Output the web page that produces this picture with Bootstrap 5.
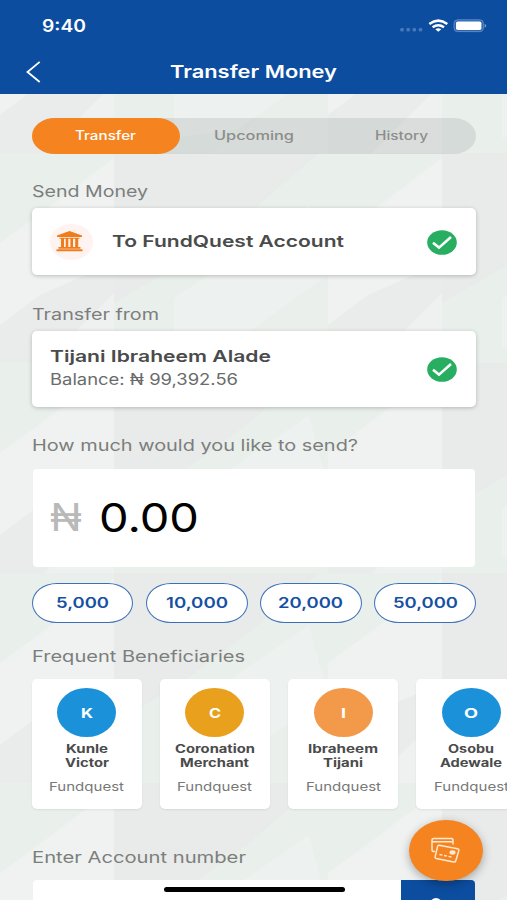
<!DOCTYPE html>
<html lang="en">
<head>
<meta charset="utf-8">
<meta name="viewport" content="width=device-width, initial-scale=1">
<title>Transfer Money</title>
<link href="https://cdn.jsdelivr.net/npm/bootstrap@5.3.0/dist/css/bootstrap.min.css" rel="stylesheet">
<style>
:root{--brand:#0c4da0;--accent:#f58420;--ink:#4a4b4b;--muted-ink:#7c7e7d}
body{font-family:Inter,"Open Sans",sans-serif;color:var(--ink);background:#ecefed}
.screen{height:900px;overflow:hidden;position:relative;
 background:#edf0ee url("data:image/svg+xml,%3Csvg xmlns='http://www.w3.org/2000/svg' width='328' height='210'%3E%3Cpath fill='%23ebefec' d='M0 0h328v210H0z'/%3E%3Cpath fill='%23e8ebe9' d='M0 0h205L135 60 60 115 0 150z'/%3E%3Cpath fill='%23e9efeb' d='M205 0h123v32L255 90 211 122 130 187 95 210H0v-60L60 115 135 60z'/%3E%3Cpath fill='%23eff2f0' d='M328 5v120L260 155 214 190v-100L255 60z'/%3E%3Cpath fill='%23edf1ef' d='M60 145 195 52 214 122 125 186 60 195z'/%3E%3Cpath fill='%23e9eceb' d='M214 172 254 142 328 110v100H214z'/%3E%3Cpath fill='%23eef1ef' d='M328 140v70h-70z'/%3E%3C/svg%3E") 114px 153px}
.fit{display:inline-block;white-space:nowrap;transform-origin:0 50%}
.fit-slot{display:block;white-space:nowrap;overflow:visible;flex:none}
.app-head{background:var(--brand);height:93.5px}
.status-row{height:50px;padding:2px 20px 0 42px}
.title-row{height:43px;padding-left:26px}
.time-text{font-size:16.8px;font-weight:600;padding-top:1px}
.title-text{font-size:17.2px;font-weight:600}
.content{padding:24.5px 31px 0 31.5px}
.seg{height:35.5px;background:rgba(120,125,122,.17);border-radius:23px/18px;color:#8b8d8c;font-size:12.4px;font-weight:500}
.seg-on{background:var(--accent);color:#fff;border-radius:23px/18px}
.seg>div{width:148.3px;padding-top:2px}
.heading{font-size:15.8px;line-height:20px;color:var(--muted-ink)}
.heading>span{padding-top:1px}
.h-a{margin:27.8px 0 6.2px}.h-b{margin:28.7px 0 6px}.h-c{margin:28.7px 0 12.6px}
.h-d{margin:23px 0 11.5px}.h-e{margin:38.3px 0 12.2px}
.panel{background:#fff;border-radius:5px;box-shadow:0 1px 4px rgba(0,0,0,.22)}
.p-one{height:66.8px;padding:0 19px 0 18px}
.p-two{height:75.7px;padding:0 19px 0 18px}
.bank-disc{width:43px;height:36px;border-radius:50%;background:#fef3f1;padding-right:4px}
.strong-text{font-size:16.3px;font-weight:600;line-height:22px}
.p-one .strong-text{padding-bottom:2px;margin-left:19px}
.p-one svg.ms-auto,.p-two svg.ms-auto{margin-top:1px}
.bal-text{font-size:15.5px;line-height:23px;color:#6a6c6b}
.p-two>div{margin-top:-1px}
.p-two .bal-text{padding-top:1px}
.amount{height:98px;background:#fff;border-radius:4px;margin:0 1.3px;padding-left:17px}
.naira{font-size:37.5px;line-height:40px;color:#b9b9b9;font-weight:400}
.zero{font-size:39.5px;line-height:40px;color:#000;margin-left:17.5px}
.chips{margin-top:16px;gap:12.2px}
.chip{flex:1;height:40.5px;background:#fff;border:1.3px solid #3b70b9;border-radius:25px/20.2px;color:#1550a2;font-size:14.6px;font-weight:600;padding-top:1.5px}
.bens{gap:18.3px;width:600px}
.ben{width:110px;height:130px;background:#fff;border-radius:5px;box-shadow:0 1px 2px rgba(0,0,0,.08);padding-top:9.5px}
.avatar{width:59px;height:49px;border-radius:50%;color:#fff;font-size:12.8px;font-weight:700;padding-top:1px}
.ben-name{font-size:11.5px;font-weight:700;line-height:13.4px;margin-top:6px}
.ben-org{font-size:12px;line-height:16px;color:#777978;margin-top:8.5px}
.acct{height:40px;background:#fff;border-radius:4px;margin:0 1.3px}
.go{width:73.5px;background:var(--brand);border-radius:0 4px 0 0;padding-top:17px}
.fab{position:absolute;left:408.5px;top:819.5px;width:74px;height:61px;border-radius:50%;background:var(--accent);box-shadow:0 3px 10px rgba(0,0,0,.3)}
.home-bar{position:absolute;left:163.5px;top:886.6px;width:181px;height:5.4px;border-radius:3px;background:#000}
svg{display:block;flex:none}
</style>
<script src="https://cdn.jsdelivr.net/npm/bootstrap@5.3.0/dist/js/bootstrap.bundle.min.js"></script>
</head>
<body>
<div class="screen">
<header class="app-head text-white">
 <div class="status-row d-flex align-items-center justify-content-between">
  <span class="time-text" data-w="44">9:40</span>
  <svg width="88" height="16" viewBox="399 18 88 16">
   <g fill="#4779ba"><circle cx="402" cy="29.7" r="1.9"/><circle cx="408.2" cy="29.7" r="1.9"/><circle cx="414.3" cy="29.7" r="1.9"/><circle cx="420.5" cy="29.7" r="1.9"/></g>
   <g fill="none" stroke="#fff" stroke-width="2.5"><path d="M429.3 23.9Q438.3 17.3 447.3 23.9M432.6 27.3Q438.3 23.1 444 27.3"/></g>
   <path fill="#fff" d="M435.3 29.3Q438.3 27.4 441.3 29.3L438.3 31.8z"/>
   <rect x="454" y="19.8" width="29.4" height="11.8" rx="3.6" fill="#2c66b0" stroke="#6f97ca" stroke-width=".8"/>
   <rect x="456" y="21.4" width="25.4" height="8.6" rx="1.8" fill="#fff"/><path d="M484.7 23.8q3 2 0 4z" fill="#7fa3d1"/>
  </svg>
 </div>
 <div class="title-row d-flex align-items-center">
  <svg width="15" height="22" viewBox="0 0 15 22"><path d="M13.7 .9 1.5 11 13.7 21" fill="none" stroke="#fff" stroke-width="1.8"/></svg>
  <span class="title-text" style="margin-left:129px" data-w="167">Transfer Money</span>
 </div>
</header>
<main class="content">
 <nav class="seg d-flex">
  <div class="seg-on d-flex align-items-center justify-content-center"><span data-w="61">Transfer</span></div>
  <div class="d-flex align-items-center justify-content-center"><span data-w="80">Upcoming</span></div>
  <div class="d-flex align-items-center justify-content-center"><span data-w="53">History</span></div>
 </nav>

 <div class="heading h-a"><span data-w="116">Send Money</span></div>
 <section class="panel p-one d-flex align-items-center">
  <div class="bank-disc d-flex align-items-center justify-content-center">
   <svg width="27" height="21" viewBox="0 0 27 21" fill="#f07d1b"><path d="M13.5 0 26 4.4V6H1V4.4zM3.5 6.8h20v1h-20zM5 7.5h3v9H5zM9.7 7.5h2.6v9H9.7zM14.4 7.5H17v9h-2.600zM19.200 7.500h3v9h-3zM2.500 16h22v1.700h-22zM.5 18.300h26v2H.5z"/></svg>
  </div>
  <span class="strong-text" data-w="232">To FundQuest Account</span>
  <svg class="ms-auto" width="30" height="25" viewBox="0 0 30 25"><ellipse cx="15" cy="12.500" rx="14.800" ry="12.300" fill="#27ae60"/><path d="M6 12.800 12 17.600 24 7" fill="none" stroke="#fff" stroke-width="2.600"/></svg>
 </section>

 <div class="heading h-b"><span data-w="127">Transfer from</span></div>
 <section class="panel p-two d-flex align-items-center">
  <div>
   <div class="strong-text"><span data-w="221">Tijani Ibraheem Alade</span></div>
   <div class="bal-text"><span data-w="188">Balance: ₦ 99,392.56</span></div>
  </div>
  <svg class="ms-auto" width="30" height="25" viewBox="0 0 30 25"><ellipse cx="15" cy="12.500" rx="14.800" ry="12.300" fill="#27ae60"/><path d="M6 12.800 12 17.600 24 7" fill="none" stroke="#fff" stroke-width="2.600"/></svg>
 </section>

 <div class="heading h-c"><span data-w="326">How much would you like to send?</span></div>
 <section class="amount d-flex align-items-center">
  <span class="naira" data-w="32">₦</span><span class="zero" data-w="100">0.00</span>
 </section>
 <div class="chips d-flex">
  <div class="chip d-flex align-items-center justify-content-center"><span data-w="53">5,000</span></div>
  <div class="chip d-flex align-items-center justify-content-center"><span data-w="62">10,000</span></div>
  <div class="chip d-flex align-items-center justify-content-center"><span data-w="65">20,000</span></div>
  <div class="chip d-flex align-items-center justify-content-center"><span data-w="65">50,000</span></div>
 </div>

 <div class="heading h-d"><span data-w="213">Frequent Beneficiaries</span></div>
 <section class="bens d-flex">
  <div class="ben d-flex flex-column align-items-center">
   <div class="avatar d-flex align-items-center justify-content-center" style="background:#1b91da"><span data-w="12">K</span></div>
   <div class="ben-name d-flex flex-column align-items-center"><span data-w="42">Kunle</span><span data-w="44">Victor</span></div>
   <div class="ben-org"><span data-w="75">Fundquest</span></div>
  </div>
  <div class="ben d-flex flex-column align-items-center">
   <div class="avatar d-flex align-items-center justify-content-center" style="background:#e8a01d"><span data-w="12">C</span></div>
   <div class="ben-name d-flex flex-column align-items-center"><span data-w="80">Coronation</span><span data-w="69">Merchant</span></div>
   <div class="ben-org"><span data-w="75">Fundquest</span></div>
  </div>
  <div class="ben d-flex flex-column align-items-center">
   <div class="avatar d-flex align-items-center justify-content-center" style="background:#f2994a"><span data-w="5">I</span></div>
   <div class="ben-name d-flex flex-column align-items-center"><span data-w="70">Ibraheem</span><span data-w="40">Tijani</span></div>
   <div class="ben-org"><span data-w="75">Fundquest</span></div>
  </div>
  <div class="ben d-flex flex-column align-items-center">
   <div class="avatar d-flex align-items-center justify-content-center" style="background:#1b91da"><span data-w="14">O</span></div>
   <div class="ben-name d-flex flex-column align-items-center"><span data-w="46">Osobu</span><span data-w="62">Adewale</span></div>
   <div class="ben-org"><span data-w="75">Fundquest</span></div>
  </div>
 </section>

 <div class="heading h-e"><span data-w="214">Enter Account number</span></div>
 <section class="acct d-flex justify-content-end">
  <div class="go d-flex justify-content-center"><svg width="15" height="15" viewBox="0 0 15 15"><circle cx="6" cy="7" r="5" fill="none" stroke="#fff" stroke-width="2"/><path d="m10 11 4 3.500" stroke="#fff" stroke-width="2"/></svg></div>
 </section>
</main>
<div class="fab d-flex align-items-center justify-content-center">
 <svg width="31" height="27" viewBox="0 0 31 27" fill="none" stroke="#ffe9d2" stroke-width="1.500" stroke-linejoin="round">
  <path d="M5 14.500H3.500Q2 14.500 2 13V3Q2 1.500 3.500 1.500H21.500Q23 1.500 23 3V7.500M2 4.700H23"/>
  <path d="M9.300 8.300 27.500 11.700Q29.200 12.100 28.800 13.600L25.800 23.700Q25.300 25.300 23.600 25L6.300 21.400Q4.700 21 5.200 19.400L7.600 9.500Q8 8.100 9.300 8.300z"/>
  <path d="M9.500 17.500 21.500 20" stroke-dasharray="3 1.600"/><ellipse cx="22.500" cy="15.500" rx="3" ry="2.200" fill="#ffe9d2" stroke="none"/>
 </svg>
</div>
<div class="home-bar"></div>
</div>
<script>
// Widen each label to its design width: the outer slot takes the width, the inner text is stretched into it.
document.querySelectorAll('[data-w]').forEach(function (slot) {
  var inner = document.createElement('span');
  inner.className = 'fit';
  inner.textContent = slot.textContent;
  slot.textContent = '';
  slot.appendChild(inner);
  slot.classList.add('fit-slot');
  var natural = inner.getBoundingClientRect().width;
  slot.style.width = slot.dataset.w + 'px';
  inner.style.transform = 'scaleX(' + slot.dataset.w / natural + ')';
});
</script>
</body>
</html>
